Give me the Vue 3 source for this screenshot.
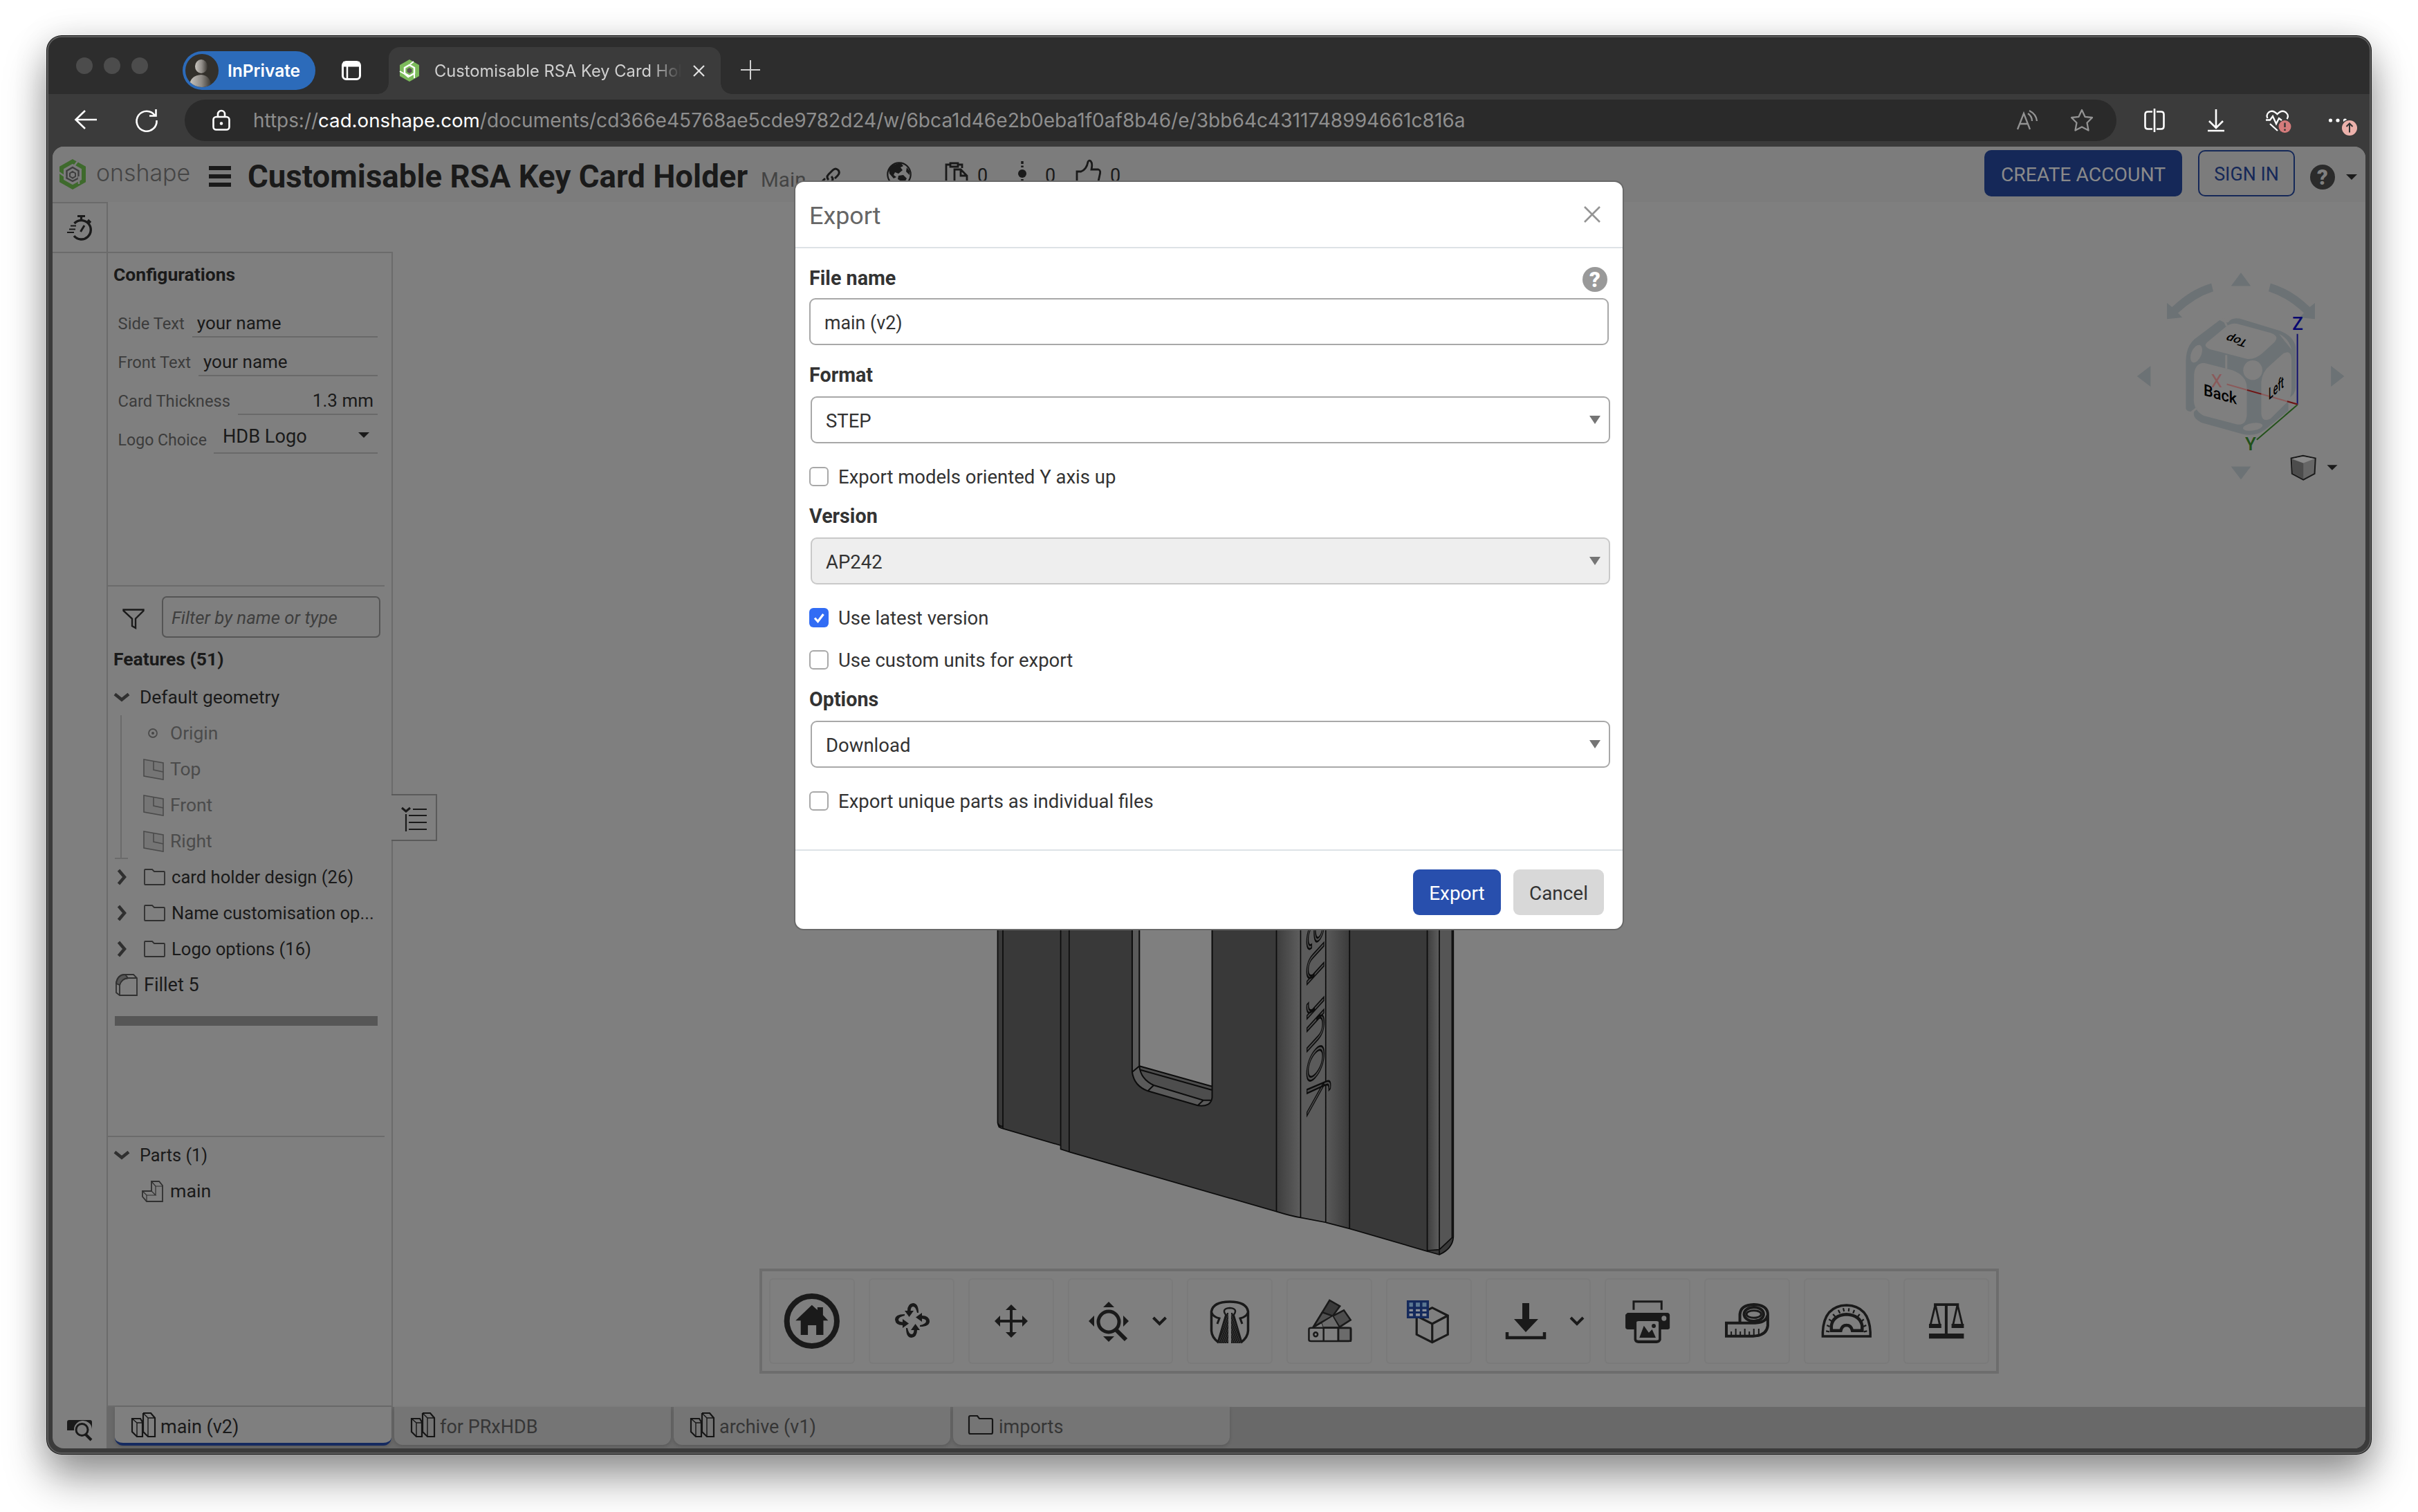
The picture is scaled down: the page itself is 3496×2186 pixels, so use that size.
<script setup>
const planes = ['Top', 'Front', 'Right']
const folders = ['card holder design (26)', 'Name customisation op...', 'Logo options (16)']
const docTabs = [
  { name: 'main (v2)', active: true },
  { name: 'for PRxHDB' },
  { name: 'archive (v1)' },
  { name: 'imports', folder: true },
]
const configs = [
  { label: 'Side Text', value: 'your name' },
  { label: 'Front Text', value: 'your name' },
  { label: 'Card Thickness', value: '1.3 mm', kind: 'num' },
  { label: 'Logo Choice', value: 'HDB Logo', kind: 'pick' },
]
const threads = [0, 1, 2, 3, 4, 5, 6, 7]
</script>

<template>
  <div class="desktop">
    <div class="window">
      <div class="strip">
        <div class="lights"><i></i><i></i><i></i></div>
        <div class="private">
          <svg class="avatar" width="48" height="48" viewBox="0 0 48 48">
            <defs>
              <linearGradient id="av" x1="0" x2="1"><stop offset="0" stop-color="#c9c5bf" /><stop offset=".55" stop-color="#8f8b86" /><stop offset="1" stop-color="#3b3833" /></linearGradient>
              <clipPath id="avc"><circle cx="24" cy="24" r="24" /></clipPath>
            </defs>
            <circle cx="24" cy="24" r="24" fill="#33302b" />
            <g clip-path="url(#avc)" fill="url(#av)"><ellipse cx="23" cy="18" rx="9" ry="10" /><path d="M6 48V44Q8 31 23 30Q35 31 37 44V48Z" /></g>
          </svg>
          <span>InPrivate</span>
        </div>
        <svg class="ic tablist" width="28" height="28" viewBox="0 0 28 28"><rect x="1.5" y="1.5" width="25" height="25" rx="5" stroke-width="3" /><path d="M2 6H26M2 3.500H26" stroke-width="5" /><path d="M8 8V26" stroke-width="2.500" /></svg>
        <div class="tab">
          <svg width="30" height="32" viewBox="0 0 30 32"><path d="M15 0L29 8V24L15 32L1 24V8Z" fill="#7cbb5b" /><path d="M15 8L22 12V20L15 24L8 20V12Z" fill="none" stroke="#fff" stroke-width="2.500" /><path d="M15 12L18.500 14V18L15 20L11.500 18V14Z" fill="#56544f" /><path d="M22 12V27M16 7L21 3M1 17L8 21L14 26" stroke="#fff" stroke-width="2" fill="none" /></svg>
          <span class="tabname">Customisable RSA Key Card Holder</span>
          <svg class="ic" width="17" height="17" viewBox="0 0 17 17" stroke-width="2.200"><path d="M1 1L16 16M16 1L1 16" /></svg>
        </div>
        <svg class="ic plus" width="28" height="28" viewBox="0 0 28 28" stroke-width="2"><path d="M14 0V28M0 14H28" /></svg>
      </div>

      <div class="bar">
        <svg class="ic back" width="32" height="28" viewBox="0 0 32 28" stroke-width="2.600"><path d="M32 14H2M15 1L1.500 14L15 27" /></svg>
        <svg class="ic reload" width="34" height="32" viewBox="0 0 34 32" stroke-width="2.600"><path d="M29 9A14.500 14.500 0 1 0 31.500 16M30.500 0V9.500H21" /></svg>
        <div class="url">
          <svg class="ic lock" width="26" height="30" viewBox="0 0 26 30" stroke-width="2.600"><rect x="1.500" y="10" width="23" height="18.500" rx="4" /><path d="M8 10V6A5 5 0 0 1 18 6V10" /><circle cx="13" cy="19.500" r="1" /></svg>
          <div class="address"><span>https://</span><b>cad.onshape.com</b><span class="path">/documents/cd366e45768ae5cde9782d24/w/6bca1d46e2b0eba1f0af8b46/e/3bb64c4311748994661c816a</span></div>
          <svg class="ic aloud" width="32" height="30" viewBox="0 0 32 30" stroke-width="2.300"><path d="M2 28L11 5L20 28M5 20H17M17 5Q23 9 23 16M19 1Q29 6 30 16" /></svg>
          <svg class="ic star" width="34" height="34" viewBox="0 0 34 34" stroke-width="2.300"><path d="M17 2L21.500 11.800L32 13L24.500 20.500L26.500 31.500L17 26.500L7.500 31.500L9.500 20.500L2 13L12.500 11.800Z" stroke-linejoin="round" /></svg>
        </div>
        <svg class="ic split" width="30" height="34" viewBox="0 0 30 34" stroke-width="2.600"><path d="M12 4.500H5.500Q1.500 4.500 1.500 8.500V25.500Q1.500 29.500 5.500 29.500H12M18 4.500H24.500Q28.500 4.500 28.500 8.500V25.500Q28.500 29.500 24.500 29.500H18M15 0V34" /></svg>
        <svg class="ic down" width="24" height="32" viewBox="0 0 24 32" stroke-width="2.600"><path d="M12 0V26M2 17L12 27L22 17M0 31H24" /></svg>
        <svg class="ic heart" width="38" height="34" viewBox="0 0 38 34" stroke-width="2.300"><path d="M2.500 12Q0 7 4 3.500Q10 -1 16.500 6Q23 -1 29 3.500Q34 8 30.500 13M0 14.500H6L10 9L15 20L19 12L23 15M6 20L17 30" /><circle cx="27.500" cy="24" r="9" fill="#d47b7b" stroke="none" /><path d="M27.500 18.500V25M27.500 27.500V30" stroke="#333" /></svg>
        <svg class="more" width="44" height="34" viewBox="0 0 44 34"><g fill="#fff"><circle cx="2.500" cy="11" r="2.600" /><circle cx="13" cy="11" r="2.600" /><circle cx="23.500" cy="11" r="2.600" /></g><circle cx="30" cy="22" r="12.500" fill="#3b3b3b" /><circle cx="30" cy="22" r="11" fill="#ecb1ab" /><path d="M30 28.500V16M25.500 20L30 15.500L34.500 20" fill="none" stroke="#333" stroke-width="2" /></svg>
      </div>

      <div class="page">
        <header>
          <svg class="logo" width="38" height="44" viewBox="0 0 38 44"><path d="M19 3.500L35 12.500V31.500L19 40.500L3 31.500V12.500Z" fill="none" stroke="#3e6a2c" stroke-width="6" /><path d="M19 12L27.500 17V27.500L19 32L10.500 27.500V17Z" fill="none" stroke="#3f3f3f" stroke-width="2.400" /><path d="M19 18L23 20.500V25L19 27.500L15 25V20.500Z" fill="none" stroke="#3f3f3f" stroke-width="2" /><path d="M21 10L28 1M-1 19L9 26M28 25V36" stroke="#7c7c7c" stroke-width="2.500" /></svg>
          <span class="brand">onshape</span>
          <svg class="burger" width="32" height="30" viewBox="0 0 32 30"><path d="M0 3H32M0 15H32M0 27H32" stroke="#1a1a1a" stroke-width="6" /></svg>
          <h1>Customisable RSA Key Card Holder</h1>
          <span class="branch">Main</span>
          <svg class="ic link" width="30" height="32" viewBox="0 0 30 32" stroke-width="3"><path d="M13 18Q9 14 13 10L19 4Q23 0 27 4Q30 8 26 12L22 16M17 13Q21 17 17 21L11 27Q7 31 3 28Q0 24 4 20L8 16" /></svg>
          <svg class="globe" width="36" height="36" viewBox="0 0 36 36"><circle cx="18" cy="18" r="16.700" fill="none" stroke="#1a1a1a" stroke-width="2.200" /><path d="M8 5L20 1L24 6L20 8L23 12L17 17L12 15L10 19L14 22L10 24L4 17L3 11ZM17 20L24 19L29 24L25 31L20 34L21 28L16 25ZM29 8L33 13V19L28 14Z" fill="#1a1a1a" /></svg>
          <svg class="ic clip" width="34" height="36" viewBox="0 0 34 36" stroke-width="2.800"><path d="M7 4H2V34H14M20 4H25V9M8 2H19V7H8ZM14 35V11H23L32 20V35M23 11V20H32" /></svg>
          <span class="count c1">0</span>
          <svg class="versions" width="14" height="36" viewBox="0 0 14 36"><path d="M7 0V9M7 26V36" stroke="#1a1a1a" stroke-width="3.500" stroke-dasharray="4 2.500" /><circle cx="7" cy="18" r="6" fill="#1a1a1a" /></svg>
          <span class="count c2">0</span>
          <svg class="ic thumb" width="36" height="36" viewBox="0 0 36 36" stroke-width="2.800"><path d="M1 36V17H7Q15 14 17 3Q18 0 21 2Q24 5 22 14H32Q36 15 34 22L31 36" /></svg>
          <span class="count c3">0</span>
          <div class="grow"></div>
          <button class="create">CREATE ACCOUNT</button>
          <button class="signin">SIGN IN</button>
          <span class="help">?</span>
          <i class="caret"></i>
        </header>

        <div class="body">
          <div class="rail">
            <div class="timer">
              <svg class="ic" width="38" height="38" viewBox="0 0 38 38" stroke-width="3.400"><path d="M10.500 12A13.700 13.700 0 1 1 10 30" /><path d="M15 1.500H26M20.500 2V7M30 7L34 11" stroke-width="3.200" /><path d="M5 15.500H13M3 20.500H12M0 25H10" stroke-width="2" /><path d="M19.500 24L25 15" stroke-width="3" /></svg>
            </div>
            <svg class="find" width="38" height="32" viewBox="0 0 38 32"><path d="M3 0H33Q36 0 36 3V13A13 13 0 0 0 10 15H0V3Q0 0 3 0Z" fill="#1a1a1a" /><circle cx="21.500" cy="14" r="8.500" fill="#7c7c7c" stroke="#1a1a1a" stroke-width="3" /><path d="M27 21L35 29" stroke="#1a1a1a" stroke-width="4" /></svg>
          </div>
          <div class="side">
            <aside>
              <section class="config">
                <h2>Configurations</h2>
                <div v-for="c in configs" :key="c.label" class="cfg" :class="c.kind">
                  <label>{{ c.label }}</label>
                  <div><span>{{ c.value }}</span><i v-if="c.kind === 'pick'" class="caret"></i></div>
                </div>
              </section>
              <section class="features">
                <div class="filter">
                  <svg class="ic" width="32" height="30" viewBox="0 0 32 30" stroke-width="2.400"><path d="M1.500 1.500H30.500V3L19 14.500V28L14 25V14.500L1.500 3Z" /></svg>
                  <div class="field">Filter by name or type</div>
                </div>
                <h2>Features (51)</h2>
                <div class="row"><svg class="ic chev" width="24" height="14" viewBox="0 0 24 14"><path d="M2 2.500L12 10.500L22 2.500" /></svg><span>Default geometry</span></div>
                <div class="geometry">
                  <div class="row dim"><svg class="ic" width="30" height="14" viewBox="0 0 30 14" stroke-width="1.800"><circle cx="14" cy="7" r="6" /><circle cx="14" cy="7" r="2" fill="#474747" stroke="none" /></svg><span>Origin</span></div>
                  <div v-for="p in planes" :key="p" class="row dim"><svg class="ic" width="30" height="31" viewBox="0 0 30 31" stroke-width="1.600"><path d="M1 1L29 6V30L1 25Z" fill="#757575" /><path d="M15 3.500V16L29 19" /></svg><span>{{ p }}</span></div>
                </div>
                <div v-for="f in folders" :key="f" class="row fold">
                  <svg class="ic chev" width="14" height="24" viewBox="0 0 14 24"><path d="M2.500 2L11 12L2.500 22" /></svg>
                  <svg class="ic" width="31" height="24" viewBox="0 0 31 24" stroke-width="1.800"><path d="M1 2Q1 1 2 1H12L15 4H29Q30 4 30 5V22Q30 23 29 23H2Q1 23 1 22Z" /></svg>
                  <span>{{ f }}</span>
                </div>
                <div class="row fillet"><svg class="ic" width="32" height="32" viewBox="0 0 32 32" stroke-width="1.800"><path d="M1 27V13Q3 1 14 1H26L31 6V31H6ZM31 6H19Q6 7 6 18V31" /><path d="M1 14Q3 1 14 1L18 6Q9 7 6 16Z" fill="#565656" /></svg><span>Fillet 5</span></div>
                <div class="rollback"></div>
              </section>
              <section class="parts">
                <div class="row"><svg class="ic chev" width="24" height="14" viewBox="0 0 24 14"><path d="M2 2.500L12 10.500L22 2.500" /></svg><span>Parts (1)</span></div>
                <div class="row part"><svg class="ic" width="31" height="31" viewBox="0 0 31 31" stroke-width="1.800"><path d="M1 15H14V1H25L30 7V30H7L1 23Z" /><path d="M1 15L7 21H20L14 15M14 1L20 8V21M20 8H30M7 21V30" stroke-width="1.200" /></svg><span>main</span></div>
              </section>
            </aside>
            <nav>
              <div v-for="t in docTabs" :key="t.name" class="doc" :class="{ active: t.active }">
                <svg v-if="t.folder" class="ic" width="36" height="28" viewBox="0 0 36 28" stroke-width="2.200"><path d="M1 3Q1 1 3 1H13L16 5H33Q35 5 35 7V25Q35 27 33 27H3Q1 27 1 25Z" /></svg>
                <svg v-else class="ic" width="36" height="36" viewBox="0 0 36 36" stroke-width="2.200"><path d="M1 9H13L16 14V35H8L1 28ZM17 1H28L34 8V35H24L17 28V1" /><path d="M1 9L8 15H16M8 15V35M17 1L24 8H34M24 8V35" stroke-width="1.400" /></svg>
                <span>{{ t.name }}</span>
              </div>
            </nav>
          </div>
        </div>

        <div class="listtab"><svg class="ic" width="38" height="36" viewBox="0 0 38 36" stroke-width="2.200"><path d="M1 1L7 6L13 1" stroke-width="3" /><path d="M17 3H37M11 12H37M11 22H37M11 32H37M7 10V35" /></svg></div>

        <svg class="model" width="740" height="500" viewBox="0 0 740 500">
          <defs>
            <linearGradient id="g1"><stop offset="0" stop-color="#3d3d3d" /><stop offset="1" stop-color="#5e5e5e" /></linearGradient>
            <linearGradient id="g2"><stop offset="0" stop-color="#5a5a5a" /><stop offset="1" stop-color="#3b3b3b" /></linearGradient>
          </defs>
          <g class="ns" transform="scale(.47194 .33333)">
            <path fill="#393939" fill-rule="evenodd" d="M90 0H1486V1375Q1484 1425 1443 1452L1406 1437L1168 1339L1095 1312L1018 1291L944 1265L309 1006L283 994V978L106 905L92 900L90 880ZM502 0V660Q508 720 550 742L703 805Q744 812 747 770V0Z" />
            <path fill="#5a5a5a" d="M502 0H524V634L747 722V770Q744 812 703 805L550 742Q508 720 502 660Z" />
            <path fill="#4d4d4d" d="M524 634L747 722V782L720 782L568 717Q528 690 524 634Z" />
            <path fill="url(#g1)" d="M944 0H1018V1291L944 1265Z" />
            <path fill="#5b5b5b" d="M1018 0H1095V1312L1018 1291Z" />
            <path fill="url(#g2)" d="M1095 0H1168V1339L1095 1312Z" />
            <path fill="url(#g1)" d="M1406 0H1443V1430L1406 1434Z" />
            <path fill="#555" d="M1443 0H1486V1375L1443 1430Z" />
            <g fill="none" stroke="#0c0c0c" stroke-width="1.700">
              <path d="M90 0V880Q92 902 106 905L283 978M106 0V905M90 880Q95 897 106 895M283 0V994L309 1006V0M309 1006L944 1265V0M944 1265Q990 1285 1018 1291V0M1018 1291L1095 1312V0M1095 1312L1168 1339V0M1168 1339L1406 1437V0M1443 0V1430L1406 1434M1443 1430V1452L1406 1437M1482 0V1378L1443 1430M1486 0V1375Q1484 1425 1443 1452" />
              <path d="M502 0V660Q508 720 550 742L703 805Q744 812 747 770V0M524 0V634L502 660M524 634L747 722M527 650L747 738M524 634Q528 690 568 717L720 782H745M568 717L550 742M720 782L703 805" stroke-width="2" />
            </g>
          </g>
          <text class="engrave" transform="matrix(0 -1.860 1 -1.100 514 258)">your name</text>
        </svg>

        <svg class="viewcube" width="640" height="600" viewBox="0 0 640 600">
          <g class="ns" transform="scale(.40816 .38265)">
            <g fill="#6c7275">
              <path d="M980 717L1015 767H945ZM980 1498L1015 1449H945ZM612 1108L660 1069V1147ZM1346 1108L1299 1069V1147Z" />
              <path d="M875 757L882 787Q815 810 757 869L772 886L718 892V831L736 847Q800 780 875 757ZM1085 757L1078 787Q1145 810 1203 869L1188 886L1242 892V831L1224 847Q1160 780 1085 757Z" />
              <path d="M905 896L815 968Q786 995 785 1050V1230Q790 1245 815 1240Q805 1265 840 1283L985 1326Q1030 1338 1065 1310L1148 1238V1190Q1172 1180 1174 1150V1000Q1170 960 1120 937L975 890Q945 885 935 905L920 905Z" />
            </g>
            <g fill="#7f7f7f">
              <path d="M930 918Q950 903 975 912L1085 944Q1117 956 1100 978L1055 1022Q1030 1046 1000 1042L870 1006Q845 995 860 980Z" />
              <path d="M814 1100Q818 1058 850 1058L950 1085Q1000 1105 1001 1150V1255Q998 1295 965 1290L850 1258Q815 1240 813 1200Z" />
              <path d="M1052 1130Q1055 1090 1085 1065L1130 1022Q1158 1005 1159 1045V1150Q1160 1190 1140 1210L1085 1268Q1055 1285 1052 1250Z" />
              <ellipse cx="1022" cy="1085" rx="34" ry="37" />
              <ellipse cx="822" cy="1023" rx="18" ry="35" transform="rotate(20 822 1023)" />
              <ellipse cx="1022" cy="1299" rx="35" ry="14" transform="rotate(-10 1022 1299)" />
              <path d="M1115 948Q1150 965 1160 1008Z" />
            </g>
            <path d="M928 1028V1080M917 888L930 918M798 1250L824 1228M1145 1200L1175 1180" stroke="#7f7f7f" stroke-width="3" fill="none" />
            <path d="M1180 948V1216" stroke="#11116e" stroke-width="2" /><path d="M1180 1216L1036 1348" stroke="#22511a" stroke-width="2" />
            <path d="M930 1138L1180 1214" stroke="#8b5a5a" stroke-width="2" /><path d="M1002 1160L1052 1175M1144 1203L1180 1214" stroke="#6b1414" stroke-width="2" />
            <path d="M1158 1418L1200 1408L1244 1418L1241 1476L1201 1499L1161 1476Z" fill="#666" stroke="#1a1a1a" stroke-width="2" />
            <path d="M1161 1420L1200 1411L1241 1420L1201 1436Z" fill="#8a8a8a" /><path d="M1162 1422L1201 1437V1496L1164 1474Z" fill="#4c4c4c" />
            <path d="M1285 1443H1322L1303 1463Z" fill="#1a1a1a" />
          </g>
          <text transform="matrix(-.740 -.210 .420 -.560 397 368)">Top</text>
          <text transform="matrix(.900 .250 0 .960 370 458)">Back</text>
          <text transform="matrix(.520 -.460 0 1 451 449)">Left</text>
          <text x="482" y="357" class="ax z">Z</text>
          <text x="414" y="531" class="ax y">Y</text>
          <text x="365" y="440" class="ax x">X</text>
        </svg>

        <div class="tools">
          <button><svg width="124" height="124"><g class="ns" transform="translate(-22 -28) scale(.574 .33333)"><ellipse cx="146" cy="270" rx="63" ry="108" fill="none" stroke="#1a1a1a" stroke-width="8" /><path d="M146 200L160 222V210H174V244L187 268H175V330H157V288H136V330H118V268H105Z" /></g></svg></button>
          <button><svg width="124" height="124"><g transform="translate(63 61)"><g v-for="a in [0, 90, 180, 270]" :key="a" :transform="`rotate(${a})`"><path d="M9 -11Q9 -25 1 -25Q-7 -24 -7 -14H-11L-4.500 -5L2 -14H-2.500Q-2 -20 1 -20Q5 -20 7 -11Z" /></g></g></svg></button>
          <button><svg width="124" height="124"><path d="M62 38L70 46H64V60H78V54L86 62L78 70V64H64V78H70L62 86L54 78H60V64H46V70L38 62L46 54V60H60V46H54Z" /></svg></button>
          <button class="wide"><svg width="152" height="124"><circle cx="59" cy="63" r="15" fill="none" stroke="#1a1a1a" stroke-width="5" /><path d="M70 75L84 89" stroke="#1a1a1a" stroke-width="6" /><path d="M59 34L67 42H51ZM59 92L67 84H51ZM30 62L38 54V70ZM88 62L80 54V70Z" /><path d="M123.500 57L132.500 66L141.500 57" fill="none" stroke="#1a1a1a" stroke-width="4" /></svg></button>
          <button>
            <svg width="124" height="124"><defs><clipPath id="thr"><path d="M57 50L44 94H60V50ZM67 50L80 94H64V50Z" /></clipPath></defs>
              <g fill="none" stroke="#1a1a1a" stroke-width="3.500"><path d="M46 93Q36 86 35.500 76V48Q38 34 62 34Q86 34 88.500 48V76Q88 86 78 93" /><path d="M36 50Q38 56 47 58L44 66M88 50Q86 56 77 58L80 66" stroke-width="3" /><path d="M57 54Q49 44 62 43Q75 44 67 54" stroke-width="2.400" /><path d="M56.500 52L44.500 93M67.500 52L79.500 93" stroke-width="2.200" /></g>
              <g clip-path="url(#thr)" stroke="#1a1a1a" stroke-width="2.400"><path v-for="t in threads" :key="t" :d="`M61 ${46 + t * 7}L45 ${86 + t * 7}M63 ${46 + t * 7}L79 ${86 + t * 7}`" /></g></svg>
          </button>
          <button><svg width="124" height="124"><g class="ns" transform="translate(-770 -28) scale(.574 .33333)" stroke="#1a1a1a" stroke-width="2.500"><path d="M1409 296L1450 180L1476 205L1458 248Z" fill="#3a3a3a" /><path d="M1409 296L1432 232L1458 248L1430 275Z" fill="#505050" /><path d="M1458 248L1486 223L1503 265L1475 296Z" fill="#4d4d4d" /><path d="M1430 278L1458 248L1474 296H1434Z" fill="#6b6b6b" stroke-width="1" /><rect x="1398" y="299" width="106" height="58" rx="6" fill="#7f7f7f" /><path d="M1472 300H1503V356H1472Z" fill="#6b6b6b" /><path d="M1435 299V357M1472 299V357" /><ellipse cx="1415" cy="328" rx="5" ry="9" fill="none" /></g></svg></button>
          <button><svg width="124" height="124"><g class="ns" transform="translate(-24 -28) scale(.5931 .33333)"><path d="M115 255V328L153 362L191 328V246L153 212L135 228M115 248L153 282L191 246M153 282V362" fill="none" stroke="#1a1a1a" stroke-width="3.200" /><path d="M91 180H145V258H91Z" fill="#152a5c" /><path d="M97 190H106V208H97ZM113 190H123V208H113ZM129 190H139V208H129Z" fill="#5c7892" /><path d="M97 218H106V228H97ZM113 218H123V228H113ZM129 218H139V228H129ZM97 237H106V248H97ZM113 237H123V248H113ZM129 237H139V248H129Z" fill="#8a8f98" /></g></svg></button>
          <button class="wide"><svg width="152" height="124"><path d="M53 36H63V59H76L58 78L41 59H53Z" /><path d="M31 78V86H85V78" fill="none" stroke="#1a1a1a" stroke-width="4.500" /><path d="M123 57L132 66L141 57" fill="none" stroke="#1a1a1a" stroke-width="4" /></svg></button>
          <button><svg width="124" height="124"><g class="ns" transform="translate(-340 -28) scale(.5931 .33333)"><path d="M644 221V185H712V221" fill="none" stroke="#1a1a1a" stroke-width="3" /><path d="M629 234H727Q732 236 732 244V300Q731 306 725 306H711V352Q708 366 700 366H656Q646 364 645 350V306H629Q624 304 624 296V242Z" /><rect x="651" y="270" width="54" height="83" rx="5" fill="#7f7f7f" /><ellipse cx="718" cy="258" rx="6" ry="11" fill="#7f7f7f" /><path d="M658 342L669 290L681 320L689 306L698 342Z" /><ellipse cx="693" cy="291" rx="5" ry="9" /></g></svg></button>
          <button><svg width="124" height="124"><g class="ns" transform="translate(-484 -28) scale(.5931 .33333)" fill="none" stroke="#1a1a1a" stroke-width="4"><path d="M903 278V240Q905 200 937 198Q970 200 971 240V290Q968 333 935 335H870V278H940Q968 275 970 245" /><ellipse cx="937" cy="240" rx="24" ry="30" /><ellipse cx="937" cy="240" rx="18" ry="16" stroke-width="3" /><path d="M882 333V315M893 333V303M904 333V315M915 333V303M926 333V315M937 333V303M949 330V303" stroke-width="2" /></g></svg></button>
          <button><svg width="124" height="124"><g class="ns" transform="translate(-628 -28) scale(.5931 .33333)" fill="none" stroke="#1a1a1a" stroke-width="3.500"><path d="M1105 336V318Q1108 204 1163 201Q1218 204 1221 318V336Z" /><path d="M1126 311V290Q1130 245 1163 241Q1196 245 1201 290V311H1177Q1174 288 1163 288Q1152 288 1149 311Z" stroke-width="4.500" /><path d="M1113 313L1121 316M1115 288L1122 294M1120 262L1128 272M1130 240L1136 252M1143 222L1147 236M1155 214L1157 228M1169 214L1168 228M1182 222L1179 236M1195 240L1190 252M1205 262L1199 272M1211 288L1204 294M1213 313L1205 316" stroke-width="2.200" /></g></svg></button>
          <button><svg width="124" height="124"><g class="ns" transform="translate(-772 -28) scale(.5931 .33333)"><path d="M1376 193H1437V204H1376ZM1364 282H1394V300H1364ZM1419 282H1449V300H1419ZM1364 324H1449V346H1364Z" /><path d="M1406 200V330" stroke="#1a1a1a" stroke-width="4" /><path d="M1379 202L1368 284M1380 202L1390 284M1433 202L1423 284M1434 202L1445 284" stroke="#1a1a1a" stroke-width="2.800" /></g></svg></button>
        </div>

        <div class="dialog">
          <div class="dhead"><span>Export</span><svg class="ic" width="24" height="24" viewBox="0 0 24 24" stroke-width="2.600"><path d="M1 1L23 23M23 1L1 23" /></svg></div>
          <div class="dbody">
            <div class="lbl first">File name <span class="help">?</span></div>
            <div class="input">main (v2)</div>
            <div class="lbl">Format</div>
            <div class="select">STEP<i></i></div>
            <div class="check"><i></i>Export models oriented Y axis up</div>
            <div class="lbl">Version</div>
            <div class="select off">AP242<i></i></div>
            <div class="check on"><i><svg width="28" height="28" viewBox="0 0 28 28"><path d="M8 14.500L12.500 19.500L20.500 9" fill="none" stroke="#fff" stroke-width="3.200" /></svg></i>Use latest version</div>
            <div class="check next"><i></i>Use custom units for export</div>
            <div class="lbl">Options</div>
            <div class="select">Download<i></i></div>
            <div class="check"><i></i>Export unique parts as individual files</div>
          </div>
          <div class="dfoot"><button class="primary">Export</button><button>Cancel</button></div>
        </div>
      </div>
    </div>
  </div>
</template>

<style>
body { background: #fff; }
</style>

<style scoped>
* { box-sizing: border-box; }
.desktop { width: 3496px; height: 2186px; padding: 52px 68px; overflow: hidden; background: #fff; font-family: Roboto, "Noto Sans", sans-serif; font-size: 26px; color: #1a1a1a; }
.window { position: relative; width: 3360px; height: 2050px; border-radius: 21px; background: #3b3b3b; overflow: visible; box-shadow: 0 0 0 1px #111, 0 34px 60px rgba(0,0,0,.4), 0 4px 50px rgba(0,0,0,.13); display: flex; flex-direction: column; }
.window::after { content: ""; position: absolute; inset: 0; border: 2px solid #5d5d5d; border-radius: 21px; pointer-events: none; }
.ic { fill: none; stroke: currentColor; }
svg { display: block; flex: none; overflow: visible; }
.ns * { vector-effect: non-scaling-stroke; }
button { font: inherit; border: 0; padding: 0; margin: 0; background: none; color: inherit; white-space: nowrap; }
span, h1, h2, label { white-space: nowrap; }

.strip { height: 84px; background: #2d2d2d; border-radius: 21px 21px 0 0; display: flex; color: #fff; font-family: Inter, sans-serif; padding-left: 42px; }
.lights { display: flex; gap: 16px; margin-top: 31px; width: 154px; }
.lights i { width: 24px; height: 24px; border-radius: 50%; background: #4c4c4c; }
.private { width: 192px; height: 56px; margin-top: 22px; border-radius: 28px; background: #2c6bba; display: flex; align-items: center; padding-left: 4px; gap: 13px; font-weight: 600; font-size: 24.500px; }
.tablist { margin: 36px 40px 0 38px; }
.tab { position: relative; width: 480px; height: 68px; margin-top: 16px; border-radius: 16px 16px 0 0; background: #3b3b3b; display: flex; align-items: center; padding: 0 23px 0 15px; font-size: 23.700px; }
.tab::before, .tab::after { content: ""; position: absolute; bottom: 0; width: 16px; height: 16px; left: -16px; background: radial-gradient(circle at 0 0, transparent 15.500px, #3b3b3b 16px); }
.tab::after { left: auto; right: -16px; background: radial-gradient(circle at 100% 0, transparent 15.500px, #3b3b3b 16px); }
.tabname { width: 356px; margin: 0 18px 0 21px; color: #d0d0d0; overflow: hidden; mask-image: linear-gradient(90deg, #000 312px, transparent 358px); }
.tab > .ic { color: #e2e2e2; }
.plus { margin: 35px 0 0 29px; color: #cfcfcf; }

.bar { height: 76px; display: flex; align-items: flex-start; color: #fff; font-family: Inter, sans-serif; }
.back { margin: 23px 0 0 40px; }
.reload { margin: 22px 0 0 55px; }
.url { width: 2793px; height: 60px; margin: 8px 0 0 38px; border-radius: 30px; background: #2a2a2a; display: flex; align-items: center; }
.lock { margin-left: 40px; }
.address { display: flex; margin-left: 33px; font-size: 27.900px; color: #8e8e8e; flex: 1; }
.address b { font-weight: 400; color: #fff; font-size: 27.700px; }
.address .path { font-size: 28.100px; }
.aloud, .star { color: #939393; }
.star { margin: 0 33px 0 46px; }
.split { margin: 21px 0 0 40px; }
.down { margin: 22px 0 0 62px; }
.heart { margin: 23px 0 0 60px; }
.more { margin: 27px 0 0 53px; }

.page { position: relative; margin-left: 8px; width: 3344px; height: 1882px; border-radius: 16px; overflow: hidden; background: #7f7f7f; display: flex; flex-direction: column; }
header { height: 80px; background: #7c7c7c; display: flex; align-items: flex-start; }
.logo { margin: 18px 0 0 10px; }
.brand { font: 300 33.900px/44px Inter, sans-serif; color: #454545; width: 164px; padding-left: 15px; margin-top: 16px; }
.burger { margin: 28px 0 0 14px; }
h1 { margin: 16px 0 0 24px; font-size: 45.600px; line-height: 56px; font-weight: 700; width: 742px; }
.branch { margin-top: 28px; font-size: 29.600px; line-height: 40px; color: #444; width: 84px; }
.link { margin: 30px 0 0 1px; }
.globe { margin: 22px 0 0 67px; }
.clip { margin: 22px 0 0 48px; }
.count { font-size: 27px; line-height: 36px; margin-top: 24px; width: 18px; }
.c1 { margin-left: 13px; }
.versions { margin: 21px 0 0 40px; }
.c2 { margin-left: 26px; }
.thumb { margin: 19px 0 0 27px; }
.c3 { margin-left: 13px; }
.grow { flex: 1; }
.create, .signin { height: 67px; margin-top: 5px; border-radius: 10px; padding-top: 3px; }
.create { width: 286px; background: #152858; color: #8a8a8a; font-size: 28.300px; }
.signin { width: 140px; border: 2px solid #152858; color: #152858; font-size: 26.800px; margin-left: 23px; }
.help { width: 36px; height: 36px; border-radius: 50%; background: #2b2b2b; color: #7f7f7f; font-weight: 900; font-size: 31px; line-height: 37px; text-align: center; }
header .help { margin: 26px 16px 0 22px; }
.caret { border: 8px solid transparent; border-top-color: #1a1a1a; border-bottom: 0; }
header .caret { margin: 40px 12px 0 0; }

.body { flex: 1; display: flex; }
.rail { width: 80px; border-right: 2px solid #6b6b6b; display: flex; flex-direction: column; justify-content: space-between; }
.timer { height: 74px; border: 2px solid #6b6b6b; border-width: 2px 0; padding: 17px 0 0 21px; }
.find { margin: 0 0 9px 21px; }
.side { width: 3264px; display: flex; flex-direction: column; padding-top: 72px; }
aside { width: 412px; flex: 1; border: 2px solid #6b6b6b; border-left: 0; display: flex; flex-direction: column; }
section { width: 400px; border-bottom: 2px solid #6b6b6b; }
h2 { margin: 0 0 0 8px; font-size: 26.500px; line-height: 36px; font-weight: 700; }
.config { height: 482px; padding-top: 13px; }
.config h2 { margin-bottom: 17px; }
.cfg { display: flex; height: 56px; margin: 0 10px 0 14.600px; line-height: 38px; }
.cfg label { padding-top: 17px; font-size: 23.700px; color: #3c3c3c; margin-right: 11px; }
.cfg > div { flex: 1; padding: 16px 6px 0 7px; border-bottom: 2px solid #696969; }
.cfg.num > div { text-align: right; }
.cfg.pick > div { display: flex; justify-content: space-between; padding: 12px 12px 0 13px; font-size: 27.200px; }
.cfg.pick label { font-size: 23.100px; margin-right: 10px; padding-top: 18px; }
.cfg .caret { margin-top: 13px; }
.features { height: 796px; padding-top: 14px; }
.filter { display: flex; }
.filter .ic { margin: 18px 0 0 21px; }
.field { width: 316px; height: 60px; margin-left: 25px; border: 2px solid #555; border-radius: 7px; padding-left: 12px; font-style: italic; font-size: 25.800px; line-height: 59px; color: #3e3e3e; white-space: nowrap; }
.features h2 { margin-top: 13px; margin-bottom: 11px; }
.row { height: 52px; display: flex; align-items: center; padding-left: 8px; font-size: 26.400px; }
.chev { color: #303030; stroke-width: 4.500; margin-right: 14px; }
.row .ic:not(.chev) { color: #303030; }
.geometry { position: relative; }
.geometry::before { content: ""; position: absolute; left: 18px; top: 0; height: 206px; border-left: 2px solid #6b6b6b; }
.geometry::after { content: ""; position: absolute; left: 10px; top: 206px; width: 19px; height: 2px; background: #6b6b6b; }
.row.dim { padding-left: 51px; color: #4b4b4b; }
.row.dim .ic { color: #4b4b4b !important; margin-right: 9px; }
.fold { padding-left: 13px; font-size: 25.600px; }
.fold:nth-of-type(3) { font-size: 26.100px; }
.fold .chev { margin-right: 25px; }
.fold span { margin-left: 9px; }
.fillet { padding-left: 11px; gap: 9px; font-size: 27px; }
.rollback { width: 380px; height: 14px; margin: 19px 0 0 10px; background: #565656; }
.parts { border: 0; }
.part { padding-left: 49px; gap: 10px; font-size: 26.700px; }
.parts .row:first-child { font-size: 25.300px; }

nav { height: 60px; background: #696969; display: flex; gap: 4px; margin-left: -2px; padding-left: 12px; }
.doc { width: 400px; height: 55px; background: #757575; border-radius: 0 0 12px 12px; box-shadow: 0 2px 5px rgba(0,0,0,.15); display: flex; align-items: center; padding: 0 0 3px 24px; gap: 6px; font-size: 27px; color: #363636; }
.doc:last-child { padding-left: 22px; gap: 8px; }
.doc .ic { color: #161616; }
.doc span { padding-top: 5px; }
.doc.active { height: 56px; background: #7f7f7f; border-bottom: 4px solid #152a60; padding-bottom: 0; color: #1a1a1a; }

.listtab { position: absolute; left: 490px; top: 936px; width: 66px; height: 68px; border: 2px solid #5a5a5a; border-left: 0; background: #7f7f7f; padding: 17px 0 0 14px; }
.model { position: absolute; left: 1324px; top: 1118px; }
.engrave { font: 300 46px Roboto, sans-serif; fill: #4f4f4f; stroke: #0c0c0c; stroke-width: 1.300; }
.viewcube { position: absolute; left: 2764px; top: -92px; pointer-events: none; }
.viewcube text { font-size: 24px; text-anchor: middle; fill: #000; font-weight: 500; }
.viewcube .ax { font-size: 26px; font-weight: 500; }
.viewcube .z { fill: #070770; }
.viewcube .y { fill: #22511a; }
.viewcube .x { fill: #8b5a5a; font-weight: 400; }
.tools { position: absolute; left: 1022px; top: 1622px; height: 152px; width: 1792px; border: 4px solid #6d6d6d; display: flex; gap: 20px; padding: 10px; background: #7f7f7f; }
.tools button { width: 124px; height: 124px; border-radius: 6px; box-shadow: inset 0 0 0 2px #7a7a7a; fill: #1a1a1a; flex: none; }
.tools .wide { width: 152px; }

.dialog { position: absolute; left: 1074px; top: 51px; width: 1196px; height: 1080px; border-radius: 12px; background: #fff; box-shadow: 0 0 0 2px #696969; color: #333; font-size: 27.500px; }
.dhead { height: 96px; border-bottom: 2px solid #dde2e6; padding: 3px 32px 0 20px; display: flex; align-items: center; justify-content: space-between; font-size: 35.900px; color: #666; }
.dhead .ic { color: #949494; margin-bottom: 4px; }
.dbody { display: flow-root; height: 869px; padding: 0 18px 0 20px; }
.lbl { height: 36px; margin-top: 24px; line-height: 38px; font-weight: 700; font-size: 28.700px; display: flex; justify-content: space-between; }
.lbl .help { background: #999; color: #fff; margin: 3px 4px 0 0; }
.input, .select { height: 68px; border: 2px solid #a8a8a8; border-radius: 9px; line-height: 67px; padding: 0 12px 0 20px; }
.input { margin: 12px 2px 0 0; line-height: 69px; font-size: 26.800px; }
.select { margin: 14px 0 0 2px; display: flex; justify-content: space-between; }
.select i { border: 8px solid transparent; border-top: 12px solid #757575; border-bottom: 0; margin-top: 26px; }
.off { background: #eee; border-color: #c9c9c9; }
.check { display: flex; height: 28px; line-height: 30px; margin-top: 34px; gap: 14px; }
.check i { width: 28px; height: 28px; border: 2px solid #a8a8a8; border-radius: 6px; }
.check.on i { border: 0; background: #316cf4; }
.check.next { margin-top: 33px; }
.dfoot { border-top: 2px solid #dde2e6; display: flex; justify-content: flex-end; gap: 18px; padding: 27px 27px 0 0; }
.dfoot button { width: 131px; height: 66px; border-radius: 9px; background: #d8d8d8; font-size: 27.900px; padding-top: 2px; }
.dfoot .primary { width: 127px; background: #284fad; color: #fff; }
</style>
